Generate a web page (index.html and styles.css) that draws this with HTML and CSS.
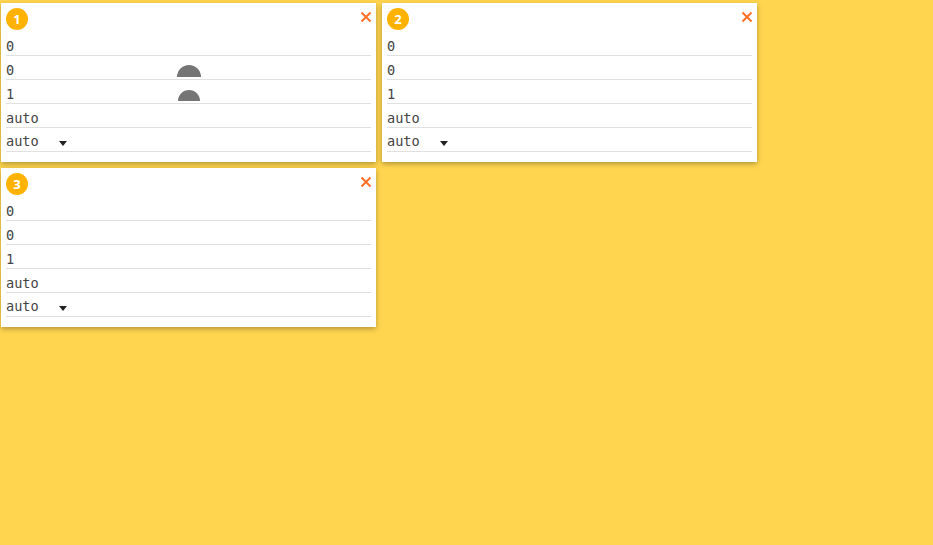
FILE: index.html
```html
<!DOCTYPE html>
<html lang="en">
<head>
<meta charset="utf-8">
<title>Cards</title>
<link rel="stylesheet" href="styles.css">
</head>
<body>
<main class="board">
  <section class="card">
    <header class="card-head"><span class="badge">1</span><svg class="close" viewBox="0 0 12 12"><path d="M1.5 1.5l9 9M10.5 1.5l-9 9"/></svg></header>
    <div class="row">0</div>
    <div class="row">0<span class="dome dome-a"></span></div>
    <div class="row">1<span class="dome dome-b"></span></div>
    <div class="row">auto</div>
    <div class="row row-select"><span class="select-value">auto</span><svg class="caret" viewBox="0 0 8 5"><path d="M0 0h8L4 5z"/></svg></div>
  </section>
  <section class="card">
    <header class="card-head"><span class="badge">2</span><svg class="close" viewBox="0 0 12 12"><path d="M1.5 1.5l9 9M10.5 1.5l-9 9"/></svg></header>
    <div class="row">0</div>
    <div class="row">0</div>
    <div class="row">1</div>
    <div class="row">auto</div>
    <div class="row row-select"><span class="select-value">auto</span><svg class="caret" viewBox="0 0 8 5"><path d="M0 0h8L4 5z"/></svg></div>
  </section>
  <section class="card">
    <header class="card-head"><span class="badge">3</span><svg class="close" viewBox="0 0 12 12"><path d="M1.5 1.5l9 9M10.5 1.5l-9 9"/></svg></header>
    <div class="row">0</div>
    <div class="row">0</div>
    <div class="row">1</div>
    <div class="row">auto</div>
    <div class="row row-select"><span class="select-value">auto</span><svg class="caret" viewBox="0 0 8 5"><path d="M0 0h8L4 5z"/></svg></div>
  </section>
</main>
</body>
</html>
```
FILE: styles.css
```css
* { box-sizing: border-box; }
html, body { margin: 0; height: 100%; overflow: hidden; }
body { background: #ffd54f; font-family: "DejaVu Sans Mono", monospace; }
.board { display: flex; flex-wrap: wrap; align-content: flex-start; gap: 6px; padding: 3px 1px; width: 765px; }
.card { position: relative; width: 375px; height: 159px; background: #fff; padding: 5px 5px 0; box-shadow: 0 2px 5px rgba(0,0,0,.3); }
.card-head { display: flex; justify-content: space-between; align-items: flex-start; height: 24px; }
.badge { width: 22px; height: 22px; border-radius: 50%; background: #ffb300; color: #fff; font: 700 13px/23px "Open Sans", sans-serif; text-align: center; }
.close { width: 12px; height: 12px; margin-top: 3px; margin-right: -0.5px; }
.close path { fill: none; stroke: #ff7028; stroke-width: 2; }
.row { position: relative; height: 24px; padding: 5px 0 0 0; border-bottom: 1px solid #e0e0e0; font-size: 13.6px; line-height: 18px; color: #444; }
.row-select { display: flex; align-items: flex-start; padding-top: 4px; }
.select-value { width: 53px; }
.caret { width: 8px; height: 5px; margin-top: 9px; fill: #222; }
.dome { position: absolute; background: #757575; }
.dome-a { left: 171px; top: 9px; width: 24px; height: 12px; border-radius: 12px 12px 0 0; }
.dome-b { left: 172px; top: 10px; width: 22px; height: 11px; border-radius: 11px 11px 0 0; }
```
